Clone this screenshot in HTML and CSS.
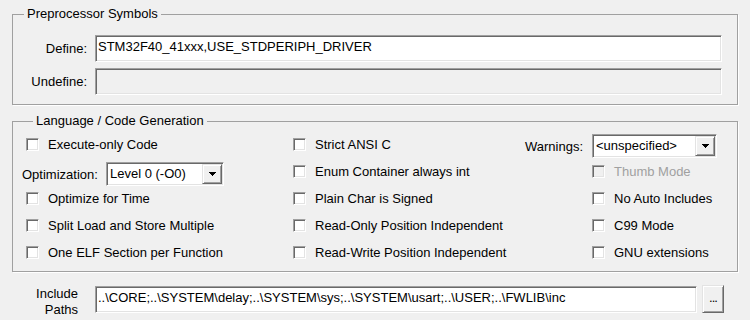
FILE: index.html
```html
<!DOCTYPE html>
<html lang="en">
<head>
    <meta charset="UTF-8">
    <title>Options for Target - C/C++</title>
    <link rel="stylesheet" href="styles.css">
</head>
<body>
    <div class="dialog">
        <fieldset class="group group-pre">
            <legend>Preprocessor Symbols</legend>
            <div class="sym-row">
                <span class="sym-label">Define:</span>
                <div class="edit">STM32F40_41xxx,USE_STDPERIPH_DRIVER</div>
            </div>
            <div class="sym-row">
                <span class="sym-label">Undefine:</span>
                <div class="edit disabled"></div>
            </div>
        </fieldset>

        <fieldset class="group group-lang">
            <legend>Language / Code Generation</legend>
            <div class="lang-cols">
                <div class="col col-1">
                    <div class="check"><span class="box"></span>Execute-only Code</div>
                    <div class="opt-row">
                        <span class="opt-label">Optimization:</span>
                        <div class="combo combo-opt">
                            <span class="combo-text">Level 0 (-O0)</span>
                            <span class="combo-btn"><svg width="7" height="4" viewBox="0 0 7 4" shape-rendering="crispEdges"><path d="M0 0h7v1H0zM1 1h5v1H1zM2 2h3v1H2zM3 3h1v1H3z" fill="#000"/></svg></span>
                        </div>
                    </div>
                    <div class="check"><span class="box"></span>Optimize for Time</div>
                    <div class="check"><span class="box"></span>Split Load and Store Multiple</div>
                    <div class="check"><span class="box"></span>One ELF Section per Function</div>
                </div>
                <div class="col col-2">
                    <div class="check"><span class="box"></span>Strict ANSI C</div>
                    <div class="check"><span class="box"></span>Enum Container always int</div>
                    <div class="check"><span class="box"></span>Plain Char is Signed</div>
                    <div class="check"><span class="box"></span>Read-Only Position Independent</div>
                    <div class="check"><span class="box"></span>Read-Write Position Independent</div>
                </div>
                <div class="col col-3">
                    <span class="warn-label">Warnings:</span>
                    <div class="combo combo-warn">
                        <span class="combo-text">&lt;unspecified&gt;</span>
                        <span class="combo-btn"><svg width="7" height="4" viewBox="0 0 7 4" shape-rendering="crispEdges"><path d="M0 0h7v1H0zM1 1h5v1H1zM2 2h3v1H2zM3 3h1v1H3z" fill="#000"/></svg></span>
                    </div>
                    <div class="check disabled"><span class="box"></span>Thumb Mode</div>
                    <div class="check"><span class="box"></span>No Auto Includes</div>
                    <div class="check"><span class="box"></span>C99 Mode</div>
                    <div class="check"><span class="box"></span>GNU extensions</div>
                </div>
            </div>
        </fieldset>

        <div class="include-row">
            <span class="include-label">Include<br>Paths</span>
            <div class="edit include-edit">..\CORE;..\SYSTEM\delay;..\SYSTEM\sys;..\SYSTEM\usart;..\USER;..\FWLIB\inc</div>
            <div class="browse-btn">...</div>
        </div>
    </div>
</body>
</html>
```

FILE: styles.css
```css
* {
    box-sizing: border-box;
}

body {
    margin: 0;
    background: #f0f0f0;
    font-family: 'Liberation Sans', Arial, sans-serif;
    font-size: 13px;
    color: #000;
}

.dialog {
    padding: 6px 12px 0;
}

/* group boxes */
.group {
    margin: 0;
    padding: 0;
    min-width: 0;
    border: 1px solid #a0a0a0;
    box-shadow: 1px 1px 0 #fff;
}

.group legend {
    margin-left: 11px;
    padding: 0 3px;
    line-height: 16px;
}

.group-pre {
    padding: 13px 15px 9px 0;
}

.group-lang {
    margin-top: 8px;
    padding: 2px 0 5px 9px;
}

/* sunken edit boxes */
.edit {
    height: 27px;
    padding: 3px 2px 0 2px;
    line-height: 16px;
    white-space: nowrap;
    overflow: hidden;
    background: #fff;
    border-style: solid;
    border-width: 1px;
    border-color: #a0a0a0 #fff #fff #a0a0a0;
    box-shadow: inset 1px 1px 0 #696969, inset -1px -1px 0 #e3e3e3;
}

.edit.disabled {
    background: #f0f0f0;
}

.sym-row {
    display: flex;
    align-items: center;
    gap: 8px;
}

.sym-row + .sym-row {
    margin-top: 6px;
}

.sym-label {
    width: 74px;
    text-align: right;
}

.sym-row .edit {
    flex: 1;
}

/* language columns */
.lang-cols {
    display: flex;
}

.col-1 {
    width: 271px;
}

.col-2 {
    width: 231px;
}

.col-3 {
    flex: 1;
    display: grid;
    grid-template-columns: 59px auto;
    grid-auto-rows: 27px;
    column-gap: 9px;
}

.check {
    height: 27px;
    display: flex;
    align-items: center;
    white-space: nowrap;
}

.col-1 .check {
    padding-left: 4px;
}

.col-3 .check {
    grid-column: 2;
}

.box {
    width: 13px;
    height: 13px;
    margin-right: 9px;
    flex: none;
    background: #fff;
    border-style: solid;
    border-width: 1px;
    border-color: #a0a0a0 #fff #fff #a0a0a0;
    box-shadow: inset 1px 1px 0 #696969, inset -1px -1px 0 #e3e3e3;
}

.check.disabled {
    color: #a0a0a0;
}

.check.disabled .box {
    background: #f0f0f0;
}

.opt-row {
    height: 27px;
    padding-top: 5px;
    display: flex;
    align-items: center;
}

.opt-label {
    width: 84px;
    flex: none;
}

.warn-label {
    text-align: right;
    align-self: center;
    padding-top: 3px;
}

/* combo boxes */
.combo {
    display: flex;
    height: 24px;
    padding: 1px;
    background: #fff;
    border-style: solid;
    border-width: 1px;
    border-color: #a0a0a0 #fff #fff #a0a0a0;
    box-shadow: inset 1px 1px 0 #696969, inset -1px -1px 0 #e3e3e3;
}

.combo-opt {
    width: 118px;
    flex: none;
}

.combo-warn {
    width: 125px;
    align-self: end;
}

.combo-text {
    flex: 1;
    padding-left: 2px;
    line-height: 20px;
    white-space: nowrap;
}

.combo-btn {
    width: 20px;
    height: 20px;
    display: flex;
    align-items: center;
    justify-content: center;
    background: #f0f0f0;
    border-style: solid;
    border-width: 1px;
    border-color: #e3e3e3 #696969 #696969 #e3e3e3;
    box-shadow: inset 1px 1px 0 #fff, inset -1px -1px 0 #a0a0a0;
}

/* include paths */
.include-row {
    display: flex;
    align-items: flex-start;
    margin-top: 13px;
}

.include-label {
    width: 66px;
    margin-top: 1px;
    margin-right: 17px;
    text-align: right;
    line-height: 16px;
}

.include-edit {
    flex: 1;
    margin-top: 1px;
}

.browse-btn {
    width: 22px;
    height: 28px;
    margin-left: 5px;
    margin-right: 14px;
    padding-top: 4px;
    text-align: center;
    line-height: 16px;
    letter-spacing: -1px;
    background: #f0f0f0;
    border-style: solid;
    border-width: 1px;
    border-color: #e3e3e3 #696969 #696969 #e3e3e3;
    box-shadow: inset 1px 1px 0 #fff, inset -1px -1px 0 #a0a0a0;
}
```
